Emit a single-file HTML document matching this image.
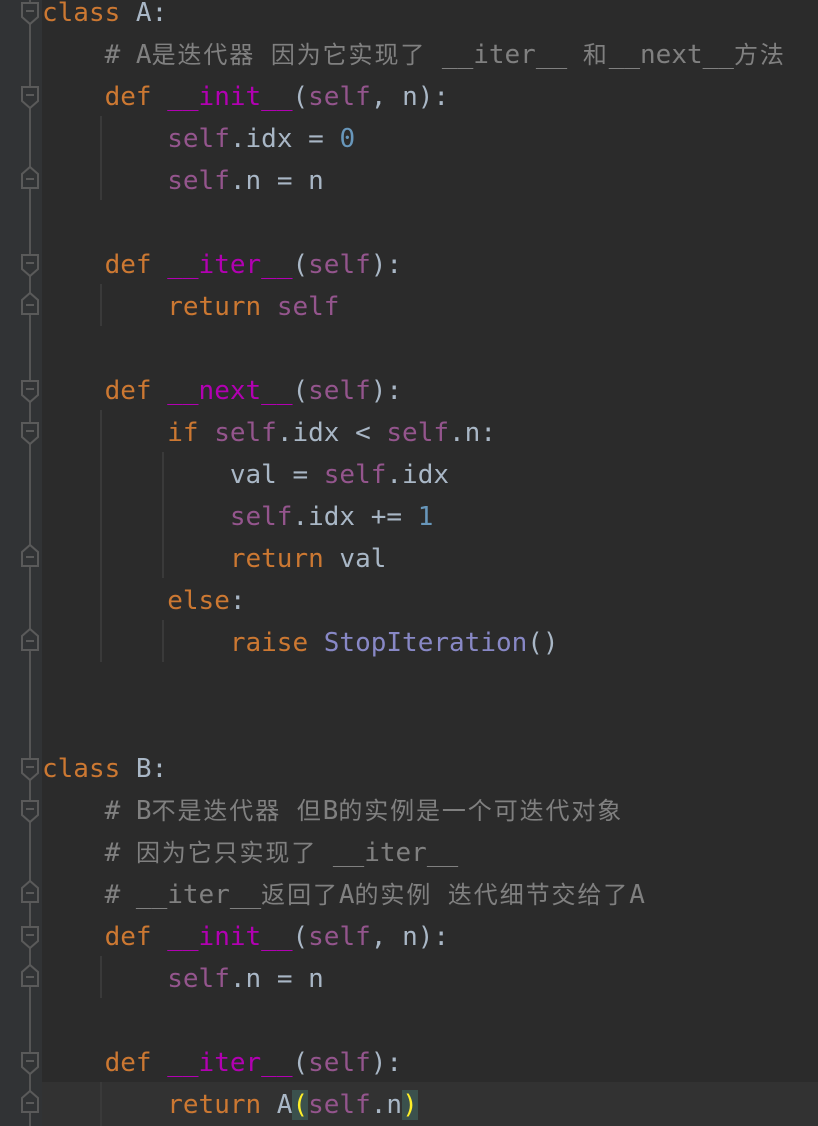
<!DOCTYPE html>
<html><head><meta charset="utf-8"><style>
html,body{margin:0;padding:0;background:#2b2b2b;width:818px;height:1126px;overflow:hidden;position:relative}
.g{position:absolute;left:0;top:0;width:42px;height:1126px;background:#313335}
.hl{position:absolute;left:42px;top:1082px;width:776px;height:44px;background:#323232}
pre{position:absolute;left:42px;top:-8px;margin:0;font-family:"DejaVu Sans Mono","Liberation Mono",monospace;font-size:26px;line-height:42px;color:#a9b7c6;white-space:pre}
.k{color:#cc7832}.s{color:#94558d}.d{color:#b200b2}.n{color:#6897bb}.c{color:#808080}.b{color:#8888c6}
.z{font-family:"Noto Sans CJK SC","WenQuanYi Zen Hei",sans-serif;font-size:24px;letter-spacing:1.9px;line-height:0}
.m{background:#3b514d;color:#ffef28}
svg{position:absolute;left:0;top:0}
</style></head><body>
<div class="g"></div>
<div class="hl"></div>
<svg width="818" height="1126">
<g stroke="#3a3a3a" stroke-width="2">
<line x1="101" y1="116" x2="101" y2="200"/>
<line x1="101" y1="284" x2="101" y2="326"/>
<line x1="101" y1="410" x2="101" y2="662"/>
<line x1="163" y1="452" x2="163" y2="578"/>
<line x1="163" y1="620" x2="163" y2="662"/>
<line x1="101" y1="956" x2="101" y2="998"/>
<line x1="101" y1="1082" x2="101" y2="1126"/>
</g>
<line x1="30" y1="0" x2="30" y2="1126" stroke="#555" stroke-width="2"/>
<g fill="#313335" stroke="#5a5a5a" stroke-width="2">
<g id="dn"><path d="M22,3H38V17L30,24L22,17Z"/><line x1="26" y1="11" x2="34" y2="11"/></g>
<use href="#dn" y="84"/><use href="#dn" y="252"/><use href="#dn" y="378"/><use href="#dn" y="420"/>
<use href="#dn" y="756"/><use href="#dn" y="798"/><use href="#dn" y="924"/><use href="#dn" y="1050"/>
<g id="up"><path d="M22,188H38V174L30,167L22,174Z"/><line x1="26" y1="179" x2="34" y2="179"/></g>
<use href="#up" y="126"/><use href="#up" y="378"/><use href="#up" y="462"/><use href="#up" y="714"/><use href="#up" y="798"/><use href="#up" y="924"/>
</g>
</svg>
<pre><span class="k">class</span> A:
    <span class="c"># A<span class="z">是迭代器</span> <span class="z">因为它实现了</span> __iter__ <span class="z">和</span>__next__<span class="z">方法</span></span>
    <span class="k">def</span> <span class="d">__init__</span>(<span class="s">self</span>, n):
        <span class="s">self</span>.idx = <span class="n">0</span>
        <span class="s">self</span>.n = n

    <span class="k">def</span> <span class="d">__iter__</span>(<span class="s">self</span>):
        <span class="k">return</span> <span class="s">self</span>

    <span class="k">def</span> <span class="d">__next__</span>(<span class="s">self</span>):
        <span class="k">if</span> <span class="s">self</span>.idx &lt; <span class="s">self</span>.n:
            val = <span class="s">self</span>.idx
            <span class="s">self</span>.idx += <span class="n">1</span>
            <span class="k">return</span> val
        <span class="k">else</span>:
            <span class="k">raise</span> <span class="b">StopIteration</span>()


<span class="k">class</span> B:
    <span class="c"># B<span class="z">不是迭代器</span> <span class="z">但</span>B<span class="z">的实例是一个可迭代对象</span></span>
    <span class="c"># <span class="z">因为它只实现了</span> __iter__</span>
    <span class="c"># __iter__<span class="z">返回了</span>A<span class="z">的实例</span> <span class="z">迭代细节交给了</span>A</span>
    <span class="k">def</span> <span class="d">__init__</span>(<span class="s">self</span>, n):
        <span class="s">self</span>.n = n

    <span class="k">def</span> <span class="d">__iter__</span>(<span class="s">self</span>):
        <span class="k">return</span> A<span class="m">(</span><span class="s">self</span>.n<span class="m">)</span>
</pre>
</body></html>
